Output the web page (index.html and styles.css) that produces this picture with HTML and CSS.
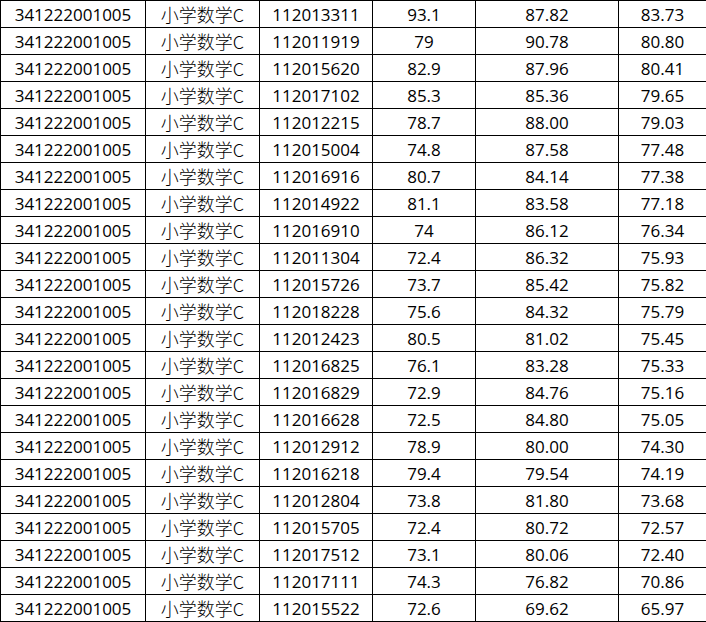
FILE: index.html
```html
<!DOCTYPE html>
<html>
<head>
<meta charset="utf-8">
<link rel="stylesheet" href="styles.css">
</head>
<body>
<table class="grid">
<colgroup>
<col class="c1"><col class="c2"><col class="c3"><col class="c4"><col class="c5"><col class="c6">
</colgroup>
<tbody>
<tr><td>341222001005</td><td class="cn">小学数学C</td><td>112013311</td><td>93.1</td><td>87.82</td><td>83.73</td></tr>
<tr><td>341222001005</td><td class="cn">小学数学C</td><td>112011919</td><td>79</td><td>90.78</td><td>80.80</td></tr>
<tr><td>341222001005</td><td class="cn">小学数学C</td><td>112015620</td><td>82.9</td><td>87.96</td><td>80.41</td></tr>
<tr><td>341222001005</td><td class="cn">小学数学C</td><td>112017102</td><td>85.3</td><td>85.36</td><td>79.65</td></tr>
<tr><td>341222001005</td><td class="cn">小学数学C</td><td>112012215</td><td>78.7</td><td>88.00</td><td>79.03</td></tr>
<tr><td>341222001005</td><td class="cn">小学数学C</td><td>112015004</td><td>74.8</td><td>87.58</td><td>77.48</td></tr>
<tr><td>341222001005</td><td class="cn">小学数学C</td><td>112016916</td><td>80.7</td><td>84.14</td><td>77.38</td></tr>
<tr><td>341222001005</td><td class="cn">小学数学C</td><td>112014922</td><td>81.1</td><td>83.58</td><td>77.18</td></tr>
<tr><td>341222001005</td><td class="cn">小学数学C</td><td>112016910</td><td>74</td><td>86.12</td><td>76.34</td></tr>
<tr><td>341222001005</td><td class="cn">小学数学C</td><td>112011304</td><td>72.4</td><td>86.32</td><td>75.93</td></tr>
<tr><td>341222001005</td><td class="cn">小学数学C</td><td>112015726</td><td>73.7</td><td>85.42</td><td>75.82</td></tr>
<tr><td>341222001005</td><td class="cn">小学数学C</td><td>112018228</td><td>75.6</td><td>84.32</td><td>75.79</td></tr>
<tr><td>341222001005</td><td class="cn">小学数学C</td><td>112012423</td><td>80.5</td><td>81.02</td><td>75.45</td></tr>
<tr><td>341222001005</td><td class="cn">小学数学C</td><td>112016825</td><td>76.1</td><td>83.28</td><td>75.33</td></tr>
<tr><td>341222001005</td><td class="cn">小学数学C</td><td>112016829</td><td>72.9</td><td>84.76</td><td>75.16</td></tr>
<tr><td>341222001005</td><td class="cn">小学数学C</td><td>112016628</td><td>72.5</td><td>84.80</td><td>75.05</td></tr>
<tr><td>341222001005</td><td class="cn">小学数学C</td><td>112012912</td><td>78.9</td><td>80.00</td><td>74.30</td></tr>
<tr><td>341222001005</td><td class="cn">小学数学C</td><td>112016218</td><td>79.4</td><td>79.54</td><td>74.19</td></tr>
<tr><td>341222001005</td><td class="cn">小学数学C</td><td>112012804</td><td>73.8</td><td>81.80</td><td>73.68</td></tr>
<tr><td>341222001005</td><td class="cn">小学数学C</td><td>112015705</td><td>72.4</td><td>80.72</td><td>72.57</td></tr>
<tr><td>341222001005</td><td class="cn">小学数学C</td><td>112017512</td><td>73.1</td><td>80.06</td><td>72.40</td></tr>
<tr><td>341222001005</td><td class="cn">小学数学C</td><td>112017111</td><td>74.3</td><td>76.82</td><td>70.86</td></tr>
<tr><td>341222001005</td><td class="cn">小学数学C</td><td>112015522</td><td>72.6</td><td>69.62</td><td>65.97</td></tr>
</tbody>
</table>
</body>
</html>
```

FILE: styles.css
```css
html, body {
  margin: 0;
  padding: 0;
  background: #ffffff;
}

.grid {
  border-collapse: collapse;
  table-layout: fixed;
  width: 706px;
  font-family: "Open Sans", "Noto Sans CJK SC", sans-serif;
  font-size: 17px;
  color: #000000;
}

.c1 { width: 145px; }
.c2 { width: 114px; }
.c3 { width: 113px; }
.c4 { width: 103px; }
.c5 { width: 143px; }
.c6 { width: 88px; }

.grid tr {
  height: 27px;
}

.grid td {
  border: 1px solid #000000;
  padding: 1px 0 0 0;
  height: 25px;
  line-height: 25px;
  text-align: center;
  white-space: nowrap;
  overflow: hidden;
}

.grid td.cn {
  font-family: "Noto Sans CJK SC", sans-serif;
  font-size: 18px;
  font-weight: 300;
}
```
